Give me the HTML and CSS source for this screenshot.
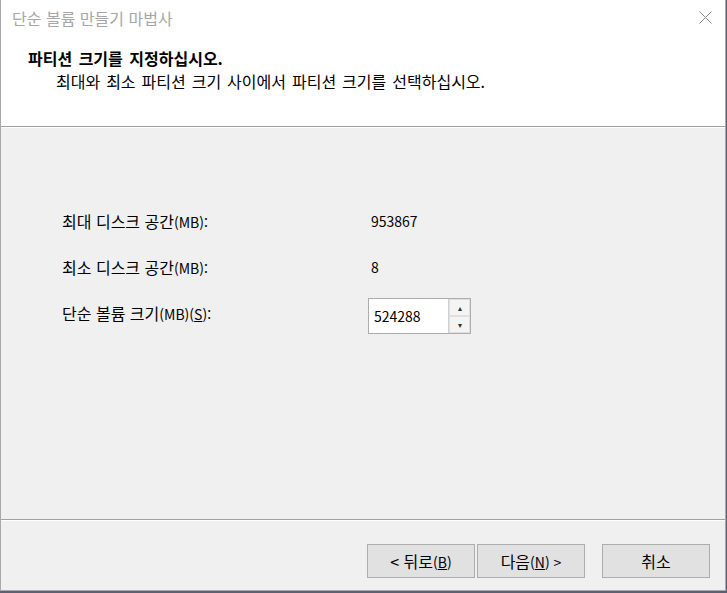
FILE: index.html
```html
<!DOCTYPE html>
<html lang="ko">

<head>
    <meta charset="UTF-8">
    <meta name="viewport" content="width=device-width, initial-scale=1.0">
    <title>단순 볼륨 만들기 마법사</title>
    <link rel="stylesheet" href="styles.css">
</head>

<body>

    <div class="window">
        <div class="header">
            <div class="titlebar">
                <span class="title">단순 볼륨 만들기 마법사</span>
                <span class="close">
                    <svg width="13" height="13" viewBox="0 0 13 13">
                        <path d="M0.5 0.5 L12.5 12.5 M12.5 0.5 L0.5 12.5" stroke="#8a8a8a" stroke-width="1" fill="none" />
                    </svg>
                </span>
            </div>
            <div class="heading">파티션 크기를 지정하십시오.</div>
            <div class="subheading">최대와 최소 파티션 크기 사이에서 파티션 크기를 선택하십시오.</div>
        </div>

        <div class="content">
            <div class="row">
                <span class="label">최대 디스크 공간<span class="latin">(MB):</span></span>
                <span class="value">953867</span>
            </div>
            <div class="row">
                <span class="label">최소 디스크 공간<span class="latin">(MB):</span></span>
                <span class="value">8</span>
            </div>
            <div class="row">
                <label class="label" for="volumeSize">단순 볼륨 크기<span class="latin">(MB)(<u>S</u>):</span></label>
                <div class="spin">
                    <input type="text" id="volumeSize" value="524288">
                    <div class="spin-buttons">
                        <span class="spin-btn">&#9652;</span>
                        <span class="spin-btn">&#9662;</span>
                    </div>
                </div>
            </div>
        </div>

        <div class="footer">
            <button type="button" class="btn">&lt; 뒤로<span class="latin">(<u>B</u>)</span></button>
            <button type="button" class="btn">다음<span class="latin">(<u>N</u>) &gt;</span></button>
            <button type="button" class="btn btn-cancel">취소</button>
        </div>
    </div>

</body>

</html>
```

FILE: styles.css
```css
body {
    margin: 0;
    background-color: #5b6172;
    font-family: "Noto Sans CJK KR", "Noto Sans", sans-serif;
    font-size: 16px;
    color: #000;
}

.window {
    width: 724px;
    height: 590px;
    border-left: 1px solid #a9a9a9;
    border-right: 1px solid #a9a9a9;
    border-bottom: 1px solid #a9a9a9;
    background-color: #f0f0f0;
    display: flex;
    flex-direction: column;
}

.header {
    background-color: #fff;
    height: 126px;
    border-bottom: 1px solid #a0a0a0;
    box-shadow: 0 1px 0 #fff;
}

.titlebar {
    height: 35px;
    display: flex;
    align-items: center;
    justify-content: space-between;
    padding-left: 11px;
    padding-right: 13px;
}

.title {
    font-size: 16px;
    color: #a6a6a6;
}

.close {
    display: flex;
}

.heading {
    font-weight: bold;
    padding-left: 27px;
    margin-top: 12px;
    line-height: 23px;
    word-spacing: 2px;
}

.subheading {
    padding-left: 55px;
    line-height: 23px;
    word-spacing: 1.5px;
}

.latin {
    font-size: 14px;
}

.content {
    flex: 1;
    padding-top: 71px;
    padding-left: 61px;
    border-bottom: 1px solid #a0a0a0;
    box-shadow: 0 1px 0 #fff;
}

.row {
    display: flex;
    align-items: center;
    height: 46px;
}

.label {
    width: 306px;
}

.value {
    padding-left: 3px;
    font-size: 14px;
}

.spin {
    display: flex;
    height: 34px;
    margin-top: 5px;
    border: 1px solid #adadad;
    background-color: #fff;
}

.spin input {
    width: 74px;
    border: none;
    border-right: 1px solid #d0d0d0;
    padding: 0 0 0 5px;
    font-family: inherit;
    font-size: 14px;
    outline: none;
}

.spin-buttons {
    display: flex;
    flex-direction: column;
    width: 21px;
    background-color: #f0f0f0;
}

.spin-btn {
    flex: 1;
    display: flex;
    align-items: center;
    justify-content: center;
    font-size: 8px;
    color: #333;
    border: 1px solid #e0e0e0;
    background-color: #f4f4f4;
}

.footer {
    height: 70px;
    display: flex;
    align-items: flex-start;
    padding-top: 24px;
    padding-left: 366px;
    box-sizing: border-box;
}

.btn {
    width: 108px;
    height: 34px;
    margin-right: 2px;
    background-color: #e1e1e1;
    border: 1px solid #adadad;
    font-family: inherit;
    font-size: 16px;
    color: #000;
    padding: 0;
}

.btn-cancel {
    margin-left: 15px;
}
```
